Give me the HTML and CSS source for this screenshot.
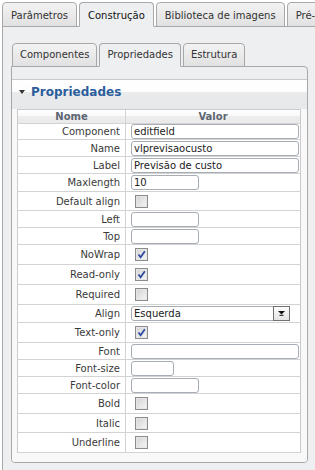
FILE: index.html
```html
<!DOCTYPE html>
<html lang="pt">
<head>
    <meta charset="UTF-8">
    <meta name="viewport" content="width=device-width, initial-scale=1.0">
    <title>Propriedades</title>
    <link rel="stylesheet" href="styles.css">
</head>
<body>
    <!-- Abas principais -->
    <div class="tab-bar">
        <span class="tab">Parâmetros</span>
        <span class="tab active">Construção</span>
        <span class="tab">Biblioteca de imagens</span>
        <span class="tab">Pré-visualização</span>
    </div>

    <div class="panel">
        <!-- Sub abas -->
        <div class="subtab-bar">
            <span class="subtab">Componentes</span>
            <span class="subtab active">Propriedades</span>
            <span class="subtab">Estrutura</span>
        </div>

        <div class="subpanel">
            <div class="box">
                <div class="box-header"><span class="arrow"></span>Propriedades</div>

                <div class="props">
                    <div class="row head"><div class="name">Nome</div><div class="value">Valor</div></div>
                    <div class="row first"><div class="name">Component</div><div class="value"><input class="field full" type="text" value="editfield"></div></div>
                    <div class="row"><div class="name">Name</div><div class="value"><input class="field full" type="text" value="vlprevisaocusto"></div></div>
                    <div class="row"><div class="name">Label</div><div class="value"><input class="field full" type="text" value="Previsão de custo"></div></div>
                    <div class="row tall"><div class="name">Maxlength</div><div class="value"><input class="field short" type="text" value="10"></div></div>
                    <div class="row check mid"><div class="name">Default align</div><div class="value"><span class="box-check"></span></div></div>
                    <div class="row"><div class="name">Left</div><div class="value"><input class="field short" type="text"></div></div>
                    <div class="row"><div class="name">Top</div><div class="value"><input class="field short" type="text"></div></div>
                    <div class="row check"><div class="name">NoWrap</div><div class="value"><span class="box-check on"><svg viewBox="0 0 11 11"><path d="M2.5 5.5 L4.6 8.2 L8.8 2.2"/></svg></span></div></div>
                    <div class="row check"><div class="name">Read-only</div><div class="value"><span class="box-check on"><svg viewBox="0 0 11 11"><path d="M2.5 5.5 L4.6 8.2 L8.8 2.2"/></svg></span></div></div>
                    <div class="row check"><div class="name">Required</div><div class="value"><span class="box-check"></span></div></div>
                    <div class="row tall"><div class="name">Align</div><div class="value">
                        <div class="select">Esquerda<span class="select-btn"><svg viewBox="0 0 7 5"><path d="M0 0 H7 L3.5 3.5 Z"/><path d="M1.5 4.3 H5.5" class="bar"/></svg></span></div>
                    </div></div>
                    <div class="row check"><div class="name">Text-only</div><div class="value"><span class="box-check on"><svg viewBox="0 0 11 11"><path d="M2.5 5.5 L4.6 8.2 L8.8 2.2"/></svg></span></div></div>
                    <div class="row"><div class="name">Font</div><div class="value"><input class="field full" type="text"></div></div>
                    <div class="row"><div class="name">Font-size</div><div class="value"><input class="field tiny" type="text"></div></div>
                    <div class="row"><div class="name">Font-color</div><div class="value"><input class="field short" type="text"></div></div>
                    <div class="row check"><div class="name">Bold</div><div class="value"><span class="box-check"></span></div></div>
                    <div class="row check mid"><div class="name">Italic</div><div class="value"><span class="box-check"></span></div></div>
                    <div class="row check"><div class="name">Underline</div><div class="value"><span class="box-check"></span></div></div>
                </div>
            </div>
        </div>
    </div>
</body>
</html>
```

FILE: styles.css
```css
* { margin: 0; padding: 0; box-sizing: border-box; }
html, body { overflow: hidden; }
body { width: 315px; height: 470px; padding: 2px 0 0 2px; background: #fff; color: #3a3a3a; font: 10px "DejaVu Sans", Verdana, sans-serif; }

/* abas */
.tab-bar { display: flex; gap: 2px; width: 420px; margin-bottom: -1px; position: relative; white-space: nowrap; }
.tab { flex: none; height: 25px; padding: 2px 8px 0; line-height: 21px; color: #333; border: 1px solid #a8a8a8; border-radius: 4px 4px 0 0; background: linear-gradient(#f3f3f3, #e1e1e1); }
.tab.active { color: #111; background: #edeff0; border-bottom-color: #edeff0; }

.panel { width: 340px; height: 460px; padding: 16px 0 0 8px; background: #edeff0; border-top: 1px solid #a8a8a8; border-left: 1px solid #a8a8a8; }

.subtab-bar { display: flex; gap: 2px; padding-left: 1px; margin-bottom: -1px; position: relative; white-space: nowrap; }
.subtab { flex: none; height: 24px; padding: 0 7px; line-height: 22px; color: #333; border: 1px solid #a8a8a8; border-radius: 4px 4px 0 0; background: linear-gradient(#f3f3f3, #e1e1e1); }
.subtab.active { background: #edeff0; border-bottom-color: #edeff0; }

.subpanel { display: flex; flex-direction: column; width: 297px; height: 397px; padding-top: 12px; background: #edeff0; border: 1px solid #a8a8a8; border-radius: 0 4px 4px 4px; }

/* caixa propriedades */
.box { flex: 1; background: #f8f8f8; border-top: 1px solid #c9c9c9; border-radius: 0 0 3px 3px; }
.box-header { height: 29px; line-height: 24px; font-size: 12px; font-weight: bold; color: #2c5d9c; background: linear-gradient(#fff 0, #fdfdfd 42%, #e9eaeb 43%, #e7e8e9 100%); }
.arrow { display: inline-block; vertical-align: middle; margin: -1px 6px 0 7px; border-left: 3px solid transparent; border-right: 3px solid transparent; border-top: 4px solid #333; }

.props { margin: 0 6px 9px 5px; background: #fff; border: 1px solid #cbcbcb; border-bottom: 0; }
.row { display: flex; height: 17px; border-bottom: 1px solid #d3d3d3; }
.row.first { height: 16px; }
.row.tall { height: 18px; }
.row.check { height: 20px; }
.row.check.mid { height: 19px; }
.row.head { height: 14px; background: linear-gradient(#fff 0, #f9f9f9 45%, #ededed 50%, #eaeaea 100%); }
.name { width: 108px; display: flex; align-items: center; justify-content: flex-end; padding-right: 5px; border-right: 1px solid #d3d3d3; }
.value { flex: 1; display: flex; align-items: center; padding-left: 5px; }
.head .name, .head .value { justify-content: center; padding: 0; font-weight: bold; color: #5c6672; }

.field { height: 15px; padding: 0 2px; color: #222; font: 10px "DejaVu Sans", Verdana, sans-serif; background: #fff; border: 1px solid #a6adb5; border-radius: 3px; outline: none; }
.field.full { width: 168px; }
.field.short { width: 68px; }
.field.tiny { width: 43px; }

.box-check { width: 13px; height: 13px; margin-left: 4px; border: 1px solid #8c8c8c; background: linear-gradient(135deg, #d2d2d2, #f7f7f7); box-shadow: inset 0 0 0 1px #e6e6e6; }
.box-check svg { display: block; width: 11px; height: 11px; }
.box-check path { fill: none; stroke: #2a47a0; stroke-width: 1.7; }

.select { display: flex; align-items: center; justify-content: space-between; width: 159px; height: 15px; padding-left: 2px; color: #222; background: #fff; border: 1px solid #a6adb5; border-radius: 3px; }
.select-btn { display: flex; align-items: center; justify-content: center; width: 17px; height: 15px; margin-right: -1px; border: 1px solid #707070; background: linear-gradient(#fdfdfd, #e3e3e3); }
.select-btn svg { width: 7px; height: 5px; }
.select-btn path { fill: #111; }
.select-btn path.bar { fill: none; stroke: #111; stroke-width: 1; }
```
